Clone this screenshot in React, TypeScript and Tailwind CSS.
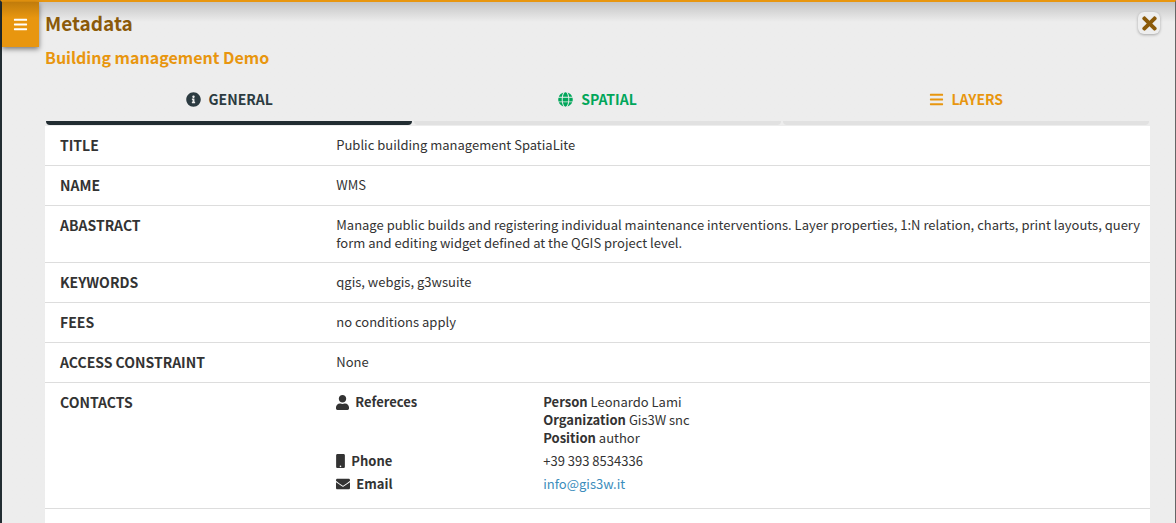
import type { ReactNode } from "react";
import { FaBars, FaEnvelope, FaGlobe, FaInfoCircle, FaMobile, FaTimes, FaUser } from "react-icons/fa";

const tabs = [
  { label: "GENERAL", icon: <FaInfoCircle />, tone: "text-[#2c3b41]", bar: "bg-[#222d32]" },
  { label: "SPATIAL", icon: <FaGlobe />, tone: "text-[#00a65a]", bar: "bg-[#e1e1e1]" },
  { label: "LAYERS", icon: <FaBars />, tone: "text-[#e8960f]", bar: "bg-[#e1e1e1]" },
];

function Contact({ icon, label, children }: { icon: ReactNode; label: string; children: ReactNode }) {
  return (
    <div className="mb-[5px] grid grid-cols-[207px_1fr]">
      <dt className="flex items-start gap-1.5 font-bold">
        <span className="flex h-[18px] items-center text-[14px]">{icon}</span>
        {label}
      </dt>
      <dd>{children}</dd>
    </div>
  );
}

const rows: { label: string; value: ReactNode }[] = [
  { label: "TITLE", value: "Public building management SpatiaLite" },
  { label: "NAME", value: "WMS" },
  {
    label: "ABASTRACT",
    value:
      "Manage public builds and registering individual maintenance interventions. Layer properties, 1:N relation, charts, print layouts, query form and editing widget defined at the QGIS project level.",
  },
  { label: "KEYWORDS", value: "qgis, webgis, g3wsuite" },
  { label: "FEES", value: "no conditions apply" },
  { label: "ACCESS CONSTRAINT", value: "None" },
  {
    label: "CONTACTS",
    value: (
      <dl>
        <Contact icon={<FaUser className="h-[15px] w-[13px]" />} label="Refereces">
          <b>Person</b> Leonardo Lami
          <br />
          <b>Organization</b> Gis3W snc
          <br />
          <b>Position</b> author
        </Contact>
        <Contact icon={<FaMobile className="w-[9px]" />} label="Phone">
          +39 393 8534336
        </Contact>
        <Contact icon={<FaEnvelope />} label="Email">
          <a href="mailto:info@gis3w.it" className="text-[#3c8dbc]">
            info@gis3w.it
          </a>
        </Contact>
      </dl>
    ),
  },
];

export default function App() {
  return (
    <div className="flex min-h-screen flex-col border-t-2 border-r border-l-2 border-t-[#e8960f] border-r-[#666666] border-l-[#222d32] bg-[#ededed] font-['Noto_Sans_CJK_SC',sans-serif] text-[13px] leading-[18px] text-[#333333]">
      <div className="flex flex-1 items-stretch bg-linear-to-b from-[#c4c4c4] to-[#ededed] to-[20px]">
        <button
          type="button"
          aria-label="Toggle menu"
          className="flex h-[45px] w-[37px] shrink-0 items-center justify-center self-start bg-linear-to-b from-[#c07c0c] to-[#e8960f] to-[16px] text-[15px] text-white shadow-[0_2px_5px_rgba(0,0,0,0.5)]"
        >
          <FaBars />
        </button>
        <main className="ml-1.5 mr-[25px] flex min-w-0 flex-1 flex-col">
          <header className="-mr-2.5 flex items-start justify-between">
            <h1 className="pt-[7px] text-[19px] leading-7 font-bold text-[#8b5a09]">Metadata</h1>
            <button
              type="button"
              aria-label="Close"
              className="mt-2.5 flex size-[22px] items-center justify-center rounded-md bg-[#eeeeee] text-[21px] text-[#8b5a09] shadow-[0_1px_3px_rgba(0,0,0,0.3)]"
            >
              <FaTimes className="shrink-0" />
            </button>
          </header>
          <h2 className="pt-2 text-[16px] leading-6 font-bold text-[#e8960f]">Building management Demo</h2>
          <div role="tablist" className="mt-4 grid grid-cols-3">
            {tabs.map((tab, i) => (
              <button
                key={tab.label}
                type="button"
                role="tab"
                aria-selected={i === 0}
                className={`flex flex-col items-stretch px-px text-[14px] font-bold ${tab.tone}`}
              >
                <span className="flex h-9 items-center justify-center gap-2 pb-2">
                  <span className="text-[15px]">{tab.icon}</span>
                  {tab.label}
                </span>
                <span className={`mb-px h-1 rounded-b-sm ${tab.bar}`} />
              </button>
            ))}
          </div>
          <table className="w-full table-fixed bg-white">
            <tbody>
              {rows.map((row) => (
                <tr key={row.label} className="border-b border-[#dddddd] align-top">
                  <th scope="row" className="w-1/4 px-[15px] py-2.5 text-left text-[14px] leading-[19px] font-bold">
                    {row.label}
                  </th>
                  <td className="py-2.5 pr-1 pl-[15px]">{row.value}</td>
                </tr>
              ))}
            </tbody>
          </table>
          <div className="flex-1 bg-white" />
        </main>
      </div>
    </div>
  );
}
